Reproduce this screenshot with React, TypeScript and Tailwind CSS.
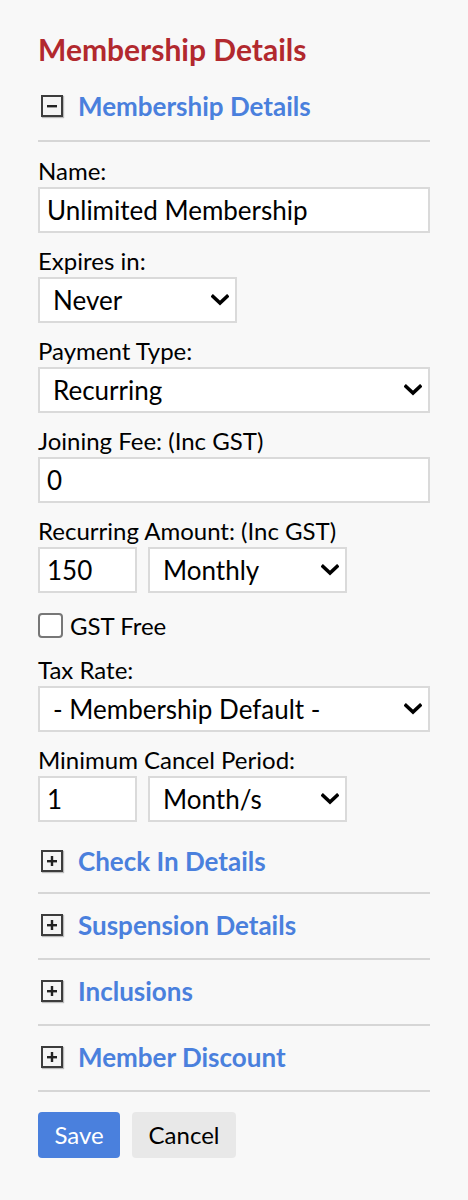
import React from "react";

function BoxIcon({ open }: { open?: boolean }) {
  return (
    <span className="flex h-[22px] w-[22px] shrink-0 items-center justify-center border-2 border-[#3c3c3c] bg-[#f4f4f4] shadow-[1px_1px_1px_rgba(0,0,0,0.25)]">
      <svg width="12" height="12" viewBox="0 0 12 12">
        <rect x="1" y="5" width="10" height="2.4" fill="#222" />
        {!open && <rect x="4.8" y="1" width="2.4" height="10" fill="#222" />}
      </svg>
    </span>
  );
}

function Chevron() {
  return (
    <svg
      width="18"
      height="12"
      viewBox="0 0 18 12"
      className="pointer-events-none absolute right-[8px] top-1/2 -translate-y-1/2"
    >
      <path d="M2 2.5 L9 9 L16 2.5" fill="none" stroke="#000" strokeWidth="3.6" strokeLinecap="square" />
    </svg>
  );
}

function Label({ children }: { children: React.ReactNode }) {
  return <div className="mb-1 h-6 whitespace-nowrap text-[24px] leading-6 text-black">{children}</div>;
}

function TextBox({ value, className = "" }: { value: string; className?: string }) {
  return (
    <input
      readOnly
      value={value}
      className={`h-[46px] border-2 border-[#dadada] bg-white px-[7px] text-[26px] text-black outline-none ${className}`}
    />
  );
}

function SelectBox({ value, className = "" }: { value: string; className?: string }) {
  return (
    <div className={`relative h-[46px] ${className}`}>
      <select
        defaultValue={value}
        className="h-full w-full appearance-none border-2 border-[#dadada] bg-white pl-[13px] text-[26px] text-black outline-none"
      >
        <option>{value}</option>
      </select>
      <Chevron />
    </div>
  );
}

function SectionHeader({ title, open }: { title: string; open?: boolean }) {
  return (
    <div className="flex h-[44px] items-center gap-[15px] pl-[3px]">
      <BoxIcon open={open} />
      <span className="whitespace-nowrap text-[26px] font-bold text-[#4a80dd]">{title}</span>
    </div>
  );
}

export default function App() {
  const collapsed = ["Suspension Details", "Inclusions", "Member Discount"];

  return (
    <div className="min-h-[1200px] bg-[#f8f8f8] px-[38px] pt-[30px] font-['Lato',sans-serif]">
      <h1 className="text-[30px] font-bold leading-[38px] text-[#b2292e]">Membership Details</h1>

      <div className="mt-[16px]">
        <SectionHeader title="Membership Details" open />
      </div>
      <div className="mt-[12px] h-[2px] bg-[#d6d6d6]" />

      {/* Membership fields */}
      <div className="pt-[17px]">
        <Label>Name:</Label>
        <TextBox value="Unlimited Membership" className="w-full" />

        <div className="mt-4">
          <Label>Expires in:</Label>
          <SelectBox value="Never" className="w-[199px]" />
        </div>

        <div className="mt-4">
          <Label>Payment Type:</Label>
          <SelectBox value="Recurring" className="w-full" />
        </div>

        <div className="mt-4">
          <Label>Joining Fee: (Inc GST)</Label>
          <TextBox value="0" className="w-full" />
        </div>

        <div className="mt-4">
          <Label>Recurring Amount: (Inc GST)</Label>
          <div className="flex gap-[11px]">
            <TextBox value="150" className="w-[99px]" />
            <SelectBox value="Monthly" className="w-[199px]" />
          </div>
        </div>

        <label className="mt-[20px] flex items-center gap-[7px] text-[24px] leading-6">
          <span className="h-[25px] w-[25px] rounded-[4px] border-2 border-[#777] bg-white" />
          GST Free
        </label>

        <div className="mt-[20px]">
          <Label>Tax Rate:</Label>
          <SelectBox value="- Membership Default -" className="w-full" />
        </div>

        <div className="mt-4">
          <Label>Minimum Cancel Period:</Label>
          <div className="flex gap-[11px]">
            <TextBox value="1" className="w-[99px]" />
            <SelectBox value="Month/s" className="w-[199px]" />
          </div>
        </div>
      </div>

      {/* Collapsed sections */}
      <div className="mt-[17px]">
        <SectionHeader title="Check In Details" />
      </div>
      <div className="mt-[9px] h-[2px] bg-[#d6d6d6]" />
      {collapsed.map((title) => (
        <div key={title}>
          <div className="mt-[9px]">
            <SectionHeader title={title} />
          </div>
          <div className="mt-[11px] h-[2px] bg-[#d6d6d6]" />
        </div>
      ))}

      <div className="mt-[20px] flex gap-[12px]">
        <button className="h-[46px] w-[82px] rounded-[4px] bg-[#4a80dd] text-[24px] text-white">Save</button>
        <button className="h-[46px] w-[104px] rounded-[4px] bg-[#e8e8e8] text-[24px] text-black">Cancel</button>
      </div>
    </div>
  );
}
